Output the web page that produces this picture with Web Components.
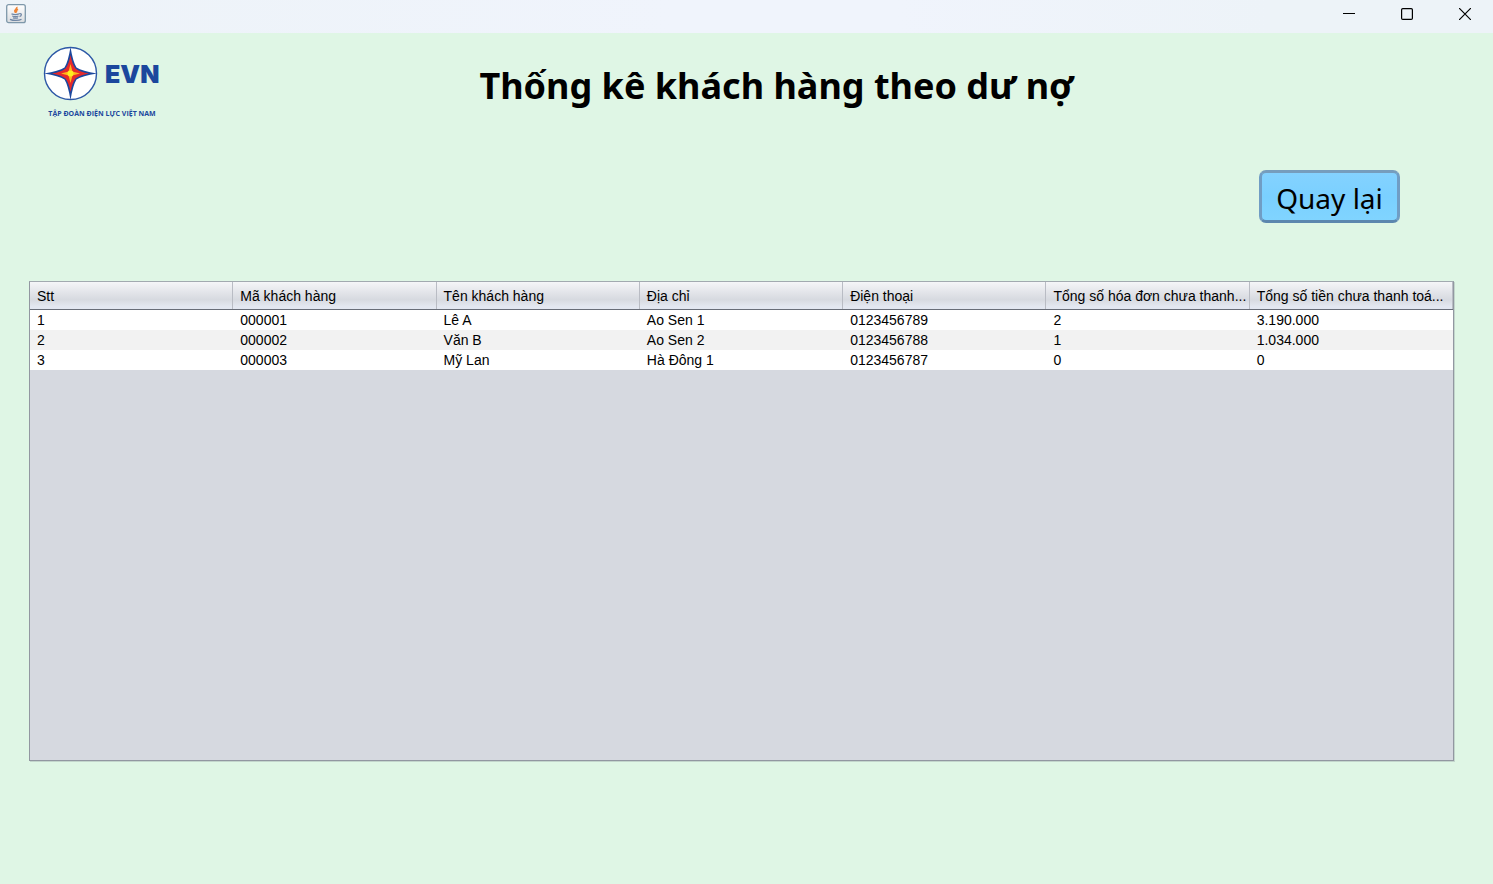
<!DOCTYPE html>
<html lang="vi">
<head>
<meta charset="utf-8">
<title>Thống kê khách hàng theo dư nợ</title>
<style>
html, body { height: 100%; }
body { margin: 0; background: #dff6e5; color: #000; font-family: "Liberation Sans", Arial, sans-serif; }
</style>
</head>
<body>
<app-window>
  <title-bar slot="bar"></title-bar>
  <page-header slot="header">
    <evn-logo slot="logo"></evn-logo>
    Thống kê khách hàng theo dư nợ
  </page-header>
  <back-button slot="actions">Quay lại</back-button>
  <debt-table></debt-table>
</app-window>
<script>
const define = (name, html, setup) => customElements.define(name, class extends HTMLElement {
  constructor() {
    super();
    const t = document.createElement('template');
    t.innerHTML = html;
    this.attachShadow({ mode: 'open' }).append(t.content.cloneNode(true));
    if (setup) setup(this.shadowRoot);
  }
});

define('app-window', `
<style>
:host { display: flex; flex-direction: column; min-height: 100%; }
.actions { display: flex; justify-content: flex-end; padding: 31px 93px 0 30px; }
main { flex: 1; display: flex; flex-direction: column; padding: 58px 39px 123px 29px; }
</style>
<slot name="bar"></slot>
<slot name="header"></slot>
<div class="actions"><slot name="actions"></slot></div>
<main><slot></slot></main>`);

define('title-bar', `
<style>
:host { display: flex; align-items: flex-start; justify-content: space-between; height: 33px;
  background: linear-gradient(90deg, #edf3f8, #f0f4fc 45%, #f0f4fc 60%, #edf3f8 85%); }
.app { display: block; margin: 4px 0 0 6px; }
.controls { display: flex; gap: 2px; }
button { width: 56px; height: 28px; padding: 0; border: 0; background: none; display: grid; place-items: center; }
button svg { display: block; }
</style>
<svg class="app" width="20" height="20" viewBox="0 0 20 20" aria-hidden="true">
  <defs><linearGradient id="g" x2="0" y2="1"><stop stop-color="#fff"/><stop offset="1" stop-color="#d9dcdf"/></linearGradient></defs>
  <rect x=".7" y=".7" width="18.6" height="18" rx="2" fill="url(#g)" stroke="#7e98aa" stroke-width="1.3"/>
  <path d="M10.7 3c1 2-3 2.600-1.700 4.700.3.700.9 1 .9 1.300M12 5.300c-2 1-2 1.700-1 2.500" fill="none" stroke="#ef8434" stroke-width="1.700"/>
  <path d="M5.500 9.800c2 .8 5.500.8 7.500 0M6.200 12c2 .7 4.500.7 6.300 0M7 13.800c1.500.5 3.500.5 5 0M4 15.300c3 1.500 9 1.500 11.500 0M13.200 9.700c3-.7 2.600 2.300.3 2.800" fill="none" stroke="#7087a5" stroke-width="1.300"/>
</svg>
<div class="controls">
  <button aria-label="Minimize"><svg width="12" height="12"><path d="M0 5.500h12" stroke="#000"/></svg></button>
  <button aria-label="Maximize"><svg width="12" height="12"><rect x=".6" y=".6" width="10.800" height="10.800" rx="1.200" fill="none" stroke="#000" stroke-width="1.200"/></svg></button>
  <button aria-label="Close"><svg width="12" height="12"><path d="M0 0l12 12M12 0L0 12" stroke="#000" stroke-width="1.200"/></svg></button>
</div>`);

define('page-header', `
<style>
:host { display: flex; align-items: flex-start; height: 106px; padding: 0 101px 0 43px; }
h1 { flex: 1; margin: 26px 0 0; text-align: center; white-space: nowrap;
  font: bold 36px/54px "Noto Sans", "Open Sans", sans-serif; }
</style>
<slot name="logo"></slot>
<h1><slot></slot></h1>`);

define('evn-logo', `
<style>
:host { display: block; width: 118px; padding-top: 13px; color: #1b479d; }
.mark { display: flex; align-items: center; gap: 7px; height: 55px; }
svg { display: block; flex: none; }
.name { font: 900 25px/28px Inter, sans-serif; }
.caption { margin-top: 8px; font: bold 7px/10px "Open Sans", "Noto Sans", sans-serif; white-space: nowrap; text-align: center; }
</style>
<div class="mark">
  <svg width="55" height="55" viewBox="0 0 55 55" aria-hidden="true">
    <circle cx="27.500" cy="27.500" r="26" fill="#fff" stroke="#2d58a6" stroke-width="1.400"/>
    <path d="M27.500 1Q30 16 33.500 21.500 39 25 54 27.500 39 30 33.500 33.500 30 39 27.500 54 25 39 21.500 33.500 16 30 1 27.500 16 25 21.500 21.500 25 16 27.500 1z" fill="#1b479d"/>
    <path d="M27.500 9Q29 18 32.500 22.500 37 26 46 27.500 37 29 32.500 32.500 29 37 27.500 46 26 37 22.500 32.500 18 29 9 27.500 18 26 22.500 22.500 26 18 27.500 9z" fill="#e52a2b"/>
    <path d="M27.500 18l2 7.500 7.500 2-7.500 2-2 7.500-2-7.500-7.500-2 7.500-2z" fill="#ffb719"/>
    <circle cx="27.500" cy="27.500" r="3" fill="#ffee20"/>
  </svg>
  <span class="name">EVN</span>
</div>
<div class="caption">TẬP ĐOÀN ĐIỆN LỰC VIỆT NAM</div>`);

define('back-button', `
<style>
:host { display: block; }
button { display: block; width: 141px; height: 53px; padding: 3px 0 0; color: #000; white-space: nowrap;
  border: 3px solid; border-color: #769dbd #709dc4 #5c87ae; border-radius: 7px;
  background: linear-gradient(#84d2ff, #7ad0ff 50%, #80d4ff);
  font: 28px/40px "Noto Sans", "Open Sans", sans-serif; }
</style>
<button type="button"><slot></slot></button>`);

define('debt-table', `
<style>
:host { display: block; flex: 1; background: #d6d9e0; border: 1px solid #9297a1; border-top-color: #a2aab0; box-shadow: 1px 1px #c3d6cc; }
table { width: 100%; border-collapse: separate; border-spacing: 0; table-layout: fixed; font-size: 14px; line-height: 20px; }
th, td { padding: 0 0 0 7px; text-align: left; font-weight: normal; white-space: nowrap; overflow: hidden; }
th { height: 27px; border-bottom: 1px solid #686d78;
  background: linear-gradient(90deg, transparent calc(100% - 1px), #b9bcc4 0),
    linear-gradient(#f5f6f8, #e2e4e9 40%, #d7dae0 65%, #e3e7f0 90%, #e3e8f2); }
td { height: 20px; background: #fff; }
tr:nth-child(even) td { background: #f2f2f2; }
</style>
<table><thead><tr></tr></thead><tbody></tbody></table>`, root => {
  const fill = (row, tag, cells) => cells.forEach(text => {
    const cell = document.createElement(tag);
    cell.textContent = text;
    if (tag === 'th') cell.scope = 'col';
    row.append(cell);
  });
  fill(root.querySelector('thead tr'), 'th', ['Stt', 'Mã khách hàng', 'Tên khách hàng', 'Địa chỉ', 'Điện thoại',
    'Tổng số hóa đơn chưa thanh...', 'Tổng số tiền chưa thanh toá...']);
  [['1', '000001', 'Lê A', 'Ao Sen 1', '0123456789', '2', '3.190.000'],
   ['2', '000002', 'Văn B', 'Ao Sen 2', '0123456788', '1', '1.034.000'],
   ['3', '000003', 'Mỹ Lan', 'Hà Đông 1', '0123456787', '0', '0']
  ].forEach(r => fill(root.querySelector('tbody').insertRow(), 'td', r));
});
</script>
</body>
</html>
